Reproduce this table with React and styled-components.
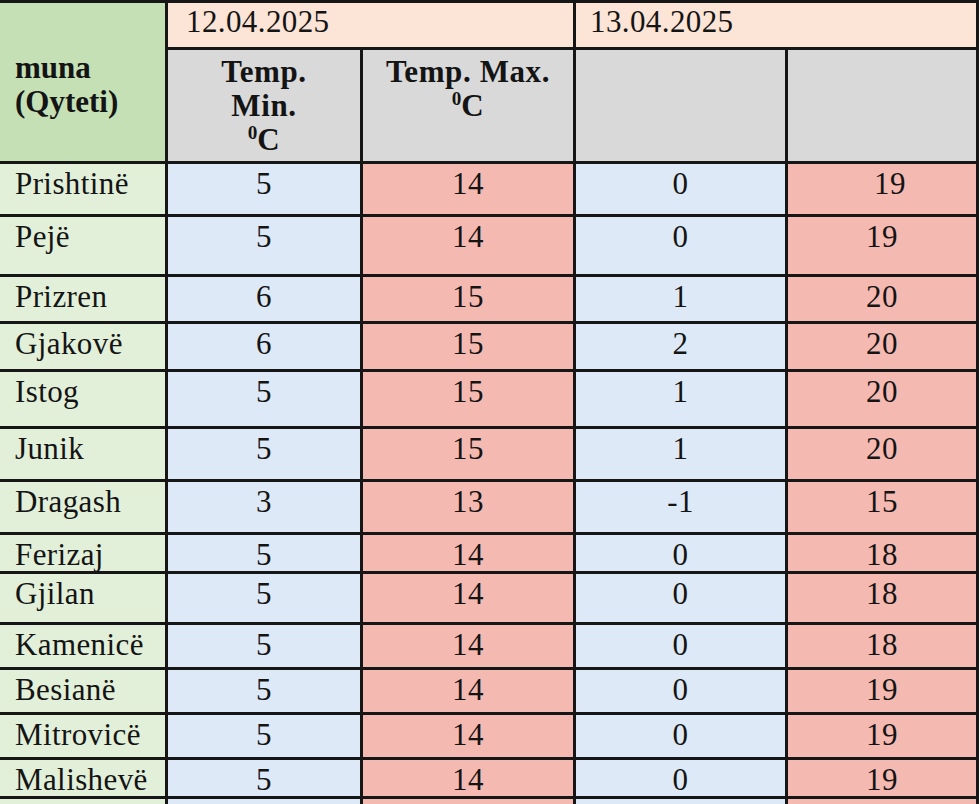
import React from "react";
import styled, { createGlobalStyle } from "styled-components";

const Global = createGlobalStyle`
  html, body { margin: 0; padding: 0; background: #ffffff; overflow: hidden; }
  body { width: 980px; height: 804px; }
`;

const C = {
  line: "#161616",
  greenHead: "#c5e0b4",
  greenBody: "#e2efd9",
  peach: "#fce4d6",
  gray: "#d9d9d9",
  blue: "#dde9f6",
  pink: "#f4b9b1",
  ink: "#141414",
};

const rowHeights = [44, 111, 50, 57, 44, 45, 54, 50, 50, 36, 48, 42, 42, 42, 36, 40];

const Grid = styled.div`
  display: grid;
  grid-template-columns: 165px 192px 210px 209px 188px;
  grid-template-rows: ${rowHeights.map((h) => `${h}px`).join(" ")};
  gap: 3px;
  padding: 3px 3px 0 0;
  width: 979px;
  box-sizing: border-box;
  background: ${C.line};
  font-family: "Liberation Serif", "Times New Roman", serif;
  font-size: 31px;
  letter-spacing: 0.4px;
  line-height: 34px;
  color: ${C.ink};
`;

const CityHead = styled.div`
  grid-row: 1 / span 2;
  grid-column: 1;
  background: ${C.greenHead};
  font-weight: bold;
  padding: 48px 0 0 15px;
  letter-spacing: 0;
`;

const DateCell = styled.div`
  grid-column: span 2;
  background: ${C.peach};
  padding: 2px 0 0 ${(p) => p.$indent}px;
`;

const HeadCell = styled.div`
  background: ${C.gray};
  font-weight: bold;
  text-align: center;
  padding-top: 5px;
  letter-spacing: 0.6px;
`;

const Sup = styled.sup`
  font-size: 0.62em;
  line-height: 0;
  vertical-align: 0.55em;
  letter-spacing: 0;
`;

const City = styled.div`
  background: ${C.greenBody};
  padding: 3px 0 0 15px;
  white-space: nowrap;
`;

const Value = styled.div`
  background: ${(p) => (p.$kind === "min" ? C.blue : C.pink)};
  text-align: center;
  padding-top: 3px;
  padding-left: ${(p) => p.$nudge || 0}px;
`;

const rows = [
  ["Prishtinë", 5, 14, 0, 19, 16],
  ["Pejë", 5, 14, 0, 19],
  ["Prizren", 6, 15, 1, 20],
  ["Gjakovë", 6, 15, 2, 20],
  ["Istog", 5, 15, 1, 20],
  ["Junik", 5, 15, 1, 20],
  ["Dragash", 3, 13, -1, 15],
  ["Ferizaj", 5, 14, 0, 18],
  ["Gjilan", 5, 14, 0, 18],
  ["Kamenicë", 5, 14, 0, 18],
  ["Besianë", 5, 14, 0, 19],
  ["Mitrovicë", 5, 14, 0, 19],
  ["Malishevë", 5, 14, 0, 19],
  ["", "", "", "", ""],
];

export default function App() {
  return (
    <>
      <Global />
      <Grid>
        <CityHead>
          muna
          <br />
          (Qyteti)
        </CityHead>
        <DateCell $indent={18}>12.04.2025</DateCell>
        <DateCell $indent={14}>13.04.2025</DateCell>
        <HeadCell>
          Temp.
          <br />
          Min.
          <br />
          <Sup>0</Sup>C
        </HeadCell>
        <HeadCell>
          Temp. Max.
          <br />
          <Sup>0</Sup>C
        </HeadCell>
        <HeadCell />
        <HeadCell />
        {rows.map(([city, a, b, c, d, nudge], i) => (
          <React.Fragment key={i}>
            <City>{city}</City>
            <Value $kind="min">{a}</Value>
            <Value $kind="max">{b}</Value>
            <Value $kind="min">{c}</Value>
            <Value $kind="max" $nudge={nudge}>{d}</Value>
          </React.Fragment>
        ))}
      </Grid>
    </>
  );
}
